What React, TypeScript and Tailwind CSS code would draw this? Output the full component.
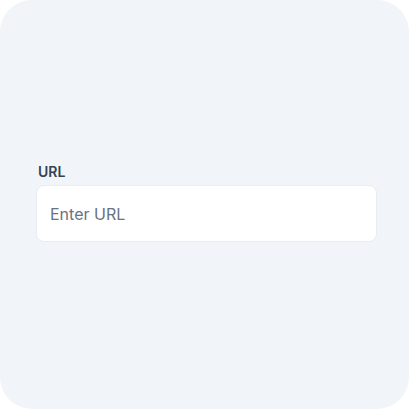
import React from 'react';

const App: React.FC = () => {
  return (
    <div className="w-[410px] h-[410px] bg-white" style={{ fontFamily: 'Inter, "Noto Sans", sans-serif' }}>
      <div className="w-[409px] h-[409px] rounded-[32px] bg-[#f1f5f9] flex flex-col pt-[162px] px-[36px]">
        <label className="block text-[14px] leading-5 font-semibold text-[#334155] mb-[3px] pl-[2px]">URL</label>
        <input
          type="text"
          placeholder="Enter URL"
          className="w-[341px] h-[57px] rounded-[8px] bg-white border border-[#e8edf3] px-[13px] text-[16px] text-[#334155] placeholder:text-[#6b7280] outline-none"
        />
      </div>
    </div>
  );
};

export default App;
